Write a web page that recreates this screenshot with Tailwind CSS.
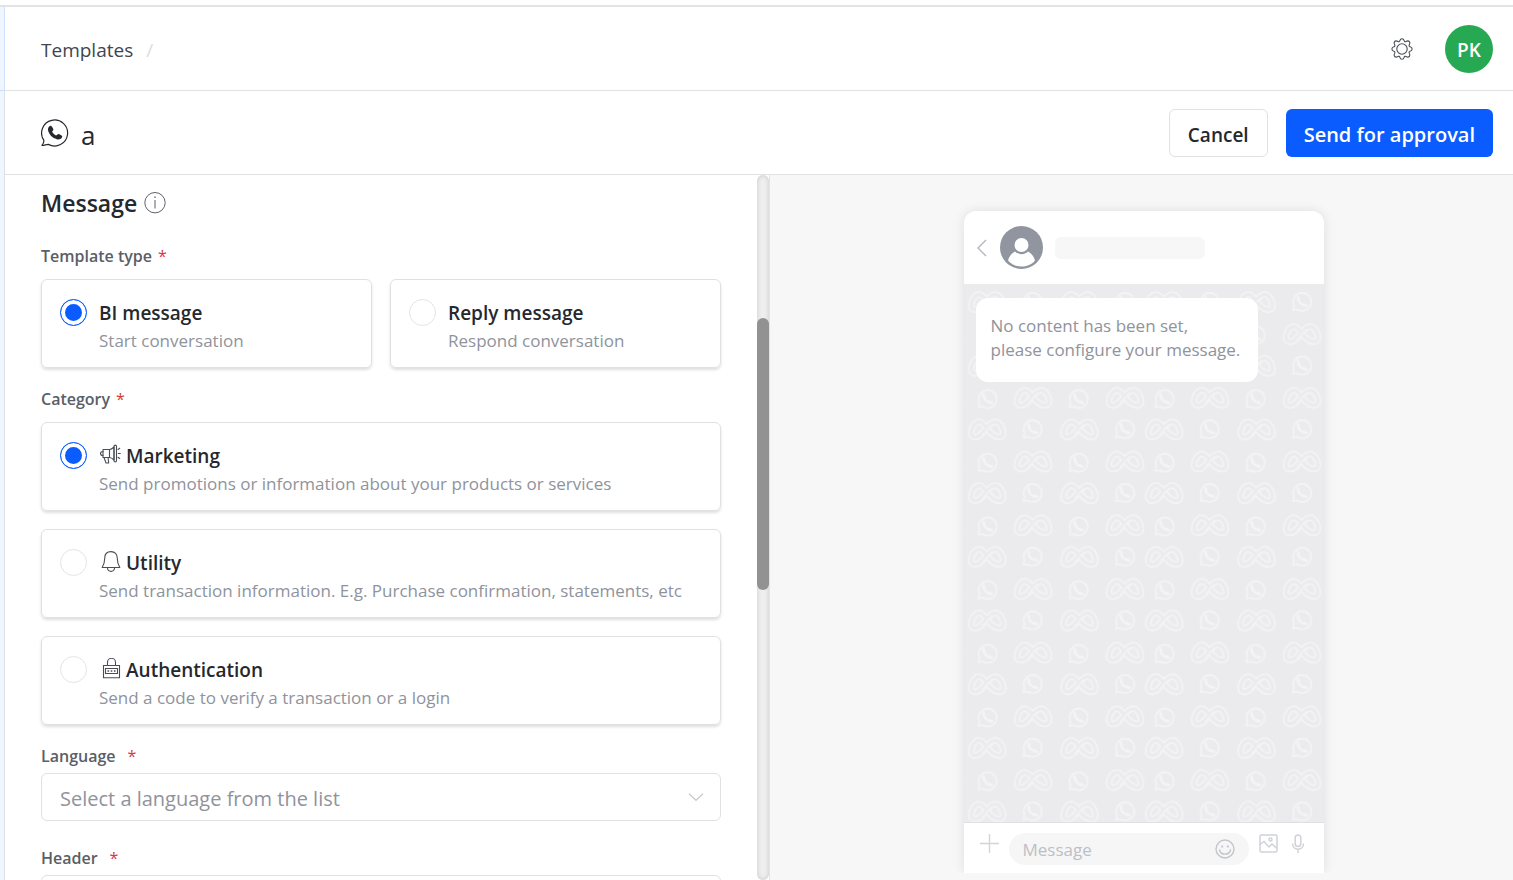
<!DOCTYPE html>
<html lang="en">
  <head>
    <meta charset="UTF-8" />
    <meta name="viewport" content="width=device-width, initial-scale=1.0" />
    <title>Templates</title>
    <!-- Tailwind CSS CDN -->
    <script src="https://cdn.jsdelivr.net/npm/@tailwindcss/browser@4"></script>
  </head>
  <body class="h-screen overflow-hidden flex flex-col bg-white font-['Open_Sans','Noto_Sans',sans-serif] text-[#25282d]">
    <div class="h-[7px] shrink-0 border-b-2 border-[#e3e3e3]"></div>
    <div class="flex flex-1 min-h-0">
      <!-- Collapsed side rail -->
      <aside class="w-[5px] shrink-0 flex flex-col bg-[#f0f6ff]">
        <div class="h-[84px] border-r border-b border-[#cfe0fb]"></div>
        <div class="flex-1 border-r border-[#e0e1e4]"></div>
      </aside>

      <div class="flex-1 min-w-0 flex flex-col">
        <!-- Top bar -->
        <header class="h-[84px] shrink-0 flex items-center justify-between pl-9 pr-5 border-b border-[#e2e2e2]">
          <nav class="flex items-center gap-[13px] text-[19px] leading-7 pt-0.5">
            <a href="#" class="text-[#41454c]">Templates</a>
            <span class="text-[#dcdde1]">/</span>
          </nav>
          <div class="flex items-center gap-8">
            <button type="button" aria-label="Settings">
              <svg class="size-[22px]" viewBox="0 0 22 22" fill="none" stroke="#4a4e55" stroke-width="1.1" stroke-linejoin="round">
                <path d="M8.900 2.700C9.200 1.300 9.800.7 11 .7s1.800.6 2.100 2c.2.900 1.200 1.300 2 .8 1.200-.8 2.400-.8 3.200 0s.8 2 0 3.200c-.5.8-.1 1.800.8 2 1.400.3 2 1.100 2 2.300s-.6 2-2 2.300c-.9.200-1.300 1.200-.8 2 .8 1.200.8 2.400 0 3.200s-2 .8-3.200 0c-.8-.5-1.800-.1-2 .8-.3 1.400-.9 2-2.100 2s-1.800-.6-2.100-2c-.2-.9-1.200-1.300-2-.8-1.200.8-2.400.8-3.200 0s-.8-2 0-3.200c.5-.8.1-1.800-.8-2-1.400-.3-2-1.100-2-2.300s.6-2 2-2.300c.9-.2 1.300-1.200.8-2-.8-1.200-.8-2.400 0-3.200s2-.8 3.200 0c.8.500 1.800.1 2-.8z" />
                <circle cx="11" cy="11" r="5.200" />
              </svg>
            </button>
            <button type="button" class="size-12 pt-1 rounded-full bg-[#27a953] text-white text-[19px] font-semibold leading-none">PK</button>
          </div>
        </header>

        <!-- Template name and actions -->
        <div class="h-[84px] shrink-0 flex items-center justify-between pl-9 pr-5 border-b border-[#e2e2e2]">
          <div class="flex items-center gap-3">
            <svg class="size-7" viewBox="0 0 28 28" fill="none" stroke="#25282d" stroke-width="1.200">
              <path d="M2.800 21.200A13 13 0 1 1 7.400 25.400C5.500 25.300 3 26.600 1 26.400c1.500-1.800 2.100-3.300 1.800-5.200z" stroke-linejoin="round" />
              <path d="M8.200 7.400c.9-.8 2.200-.7 2.800.3l1.200 2c.4.8 0 1.600-.6 2.200-.5.6-.4 1 0 1.600a8 8 0 0 0 2.900 2.700c.6.3 1 .2 1.500-.3.7-.7 1.500-1 2.300-.6l2.200 1.100c.9.500.9 1.500.3 2.300-1 1.500-3 2-5 1.500-4.300-1-7.800-4.700-8.700-8.600-.4-1.700.1-3.400 1.100-4.200z" fill="#25282d" stroke="none" />
            </svg>
            <h1 class="pt-1 text-[26px] leading-9">a</h1>
          </div>
          <div class="flex items-center gap-[18px]">
            <button type="button" class="h-12 px-[18px] pt-1 rounded-md border border-[#e0e1e3] bg-white text-[19px] leading-7 font-semibold">Cancel</button>
            <button type="button" class="h-12 px-[18px] pt-1 rounded-md bg-[#0a5cff] text-white text-[20px] leading-7 font-semibold">Send for approval</button>
          </div>
        </div>

        <main class="flex flex-1 min-h-0">
          <!-- Form -->
          <form class="w-[752px] shrink-0 overflow-hidden px-9 pt-[10px]">
            <div class="flex items-center gap-[7px] mb-[23px]">
              <h2 class="text-[23px] leading-9 font-semibold">Message</h2>
              <svg class="size-[22px]" viewBox="0 0 22 22" fill="none" stroke="#5d6169" stroke-width="1">
                <circle cx="11" cy="10.700" r="10.200" />
                <path d="M11 8v8.500" />
                <path d="M11 4.500v1.500" stroke-width="1.300" />
              </svg>
            </div>

            <fieldset class="mb-[19px]">
              <legend class="mb-[11px] text-[16px] leading-6 font-semibold text-[#5a5e66]">Template type<span class="pl-1.5 font-normal text-[#d9363e]">*</span></legend>
              <div class="grid grid-cols-2 gap-[18px]">
                <label class="flex gap-3 px-[18px] pt-[19px] pb-[14px] rounded-md border border-[#e0e1e3] shadow-[0_2px_3px_rgba(0,0,0,0.13)]">
                  <input type="radio" name="type" checked class="appearance-none size-[27px] shrink-0 rounded-full border border-[#e3e4e6] checked:border-[#0a5cff] checked:bg-[#0a5cff] checked:shadow-[inset_0_0_0_4px_white]" />
                  <span>
                    <span class="block text-[19px] leading-7 font-semibold">BI message</span>
                    <span class="block mt-0.5 text-[17px] leading-6 text-[#8f939c]">Start conversation</span>
                  </span>
                </label>
                <label class="flex gap-3 px-[18px] pt-[19px] pb-[14px] rounded-md border border-[#e0e1e3] shadow-[0_2px_3px_rgba(0,0,0,0.13)]">
                  <input type="radio" name="type" class="appearance-none size-[27px] shrink-0 rounded-full border border-[#e3e4e6] checked:border-[#0a5cff] checked:bg-[#0a5cff] checked:shadow-[inset_0_0_0_4px_white]" />
                  <span>
                    <span class="block text-[19px] leading-7 font-semibold">Reply message</span>
                    <span class="block mt-0.5 text-[17px] leading-6 text-[#8f939c]">Respond conversation</span>
                  </span>
                </label>
              </div>
            </fieldset>

            <fieldset class="mb-[19px]">
              <legend class="mb-[11px] text-[16px] leading-6 font-semibold text-[#5a5e66]">Category<span class="pl-1.5 font-normal text-[#d9363e]">*</span></legend>
              <div class="flex flex-col gap-[18px]">
                <label class="flex gap-3 px-[18px] pt-[19px] pb-[14px] rounded-md border border-[#e0e1e3] shadow-[0_2px_3px_rgba(0,0,0,0.13)]">
                  <input type="radio" name="category" checked class="appearance-none size-[27px] shrink-0 rounded-full border border-[#e3e4e6] checked:border-[#0a5cff] checked:bg-[#0a5cff] checked:shadow-[inset_0_0_0_4px_white]" />
                  <span>
                    <span class="flex items-center gap-[3px] text-[19px] leading-7 font-semibold">
                      <svg class="size-6" viewBox="0 1 24 24" fill="none" stroke="#4a4e55" stroke-width="1.100" stroke-linejoin="round" stroke-linecap="round">
                        <path d="M4 6.500h6.500c2 0 3.200-1.200 4.500-2.500v13c-1.300-1.300-2.500-2.500-4.500-2.500H4z" />
                        <path d="M4 8.500c-1.300 0-2.500.7-2.500 2s1.200 2 2.500 2M10.500 6.500v8M15 3.300c0-.8.600-1.200 1.300-1.200s1.200.4 1.200 1.200v14.400c0 .8-.5 1.200-1.200 1.200s-1.300-.4-1.300-1.200zM5 14.500l2 5.500h2.700L9 14.500M19 6.500l1.700-1.200M19.300 10.500h2M19 14.300l1.700 1.200" />
                      </svg>
                      Marketing
                    </span>
                    <span class="block mt-0.5 text-[17px] leading-6 text-[#8f939c]">Send promotions or information about your products or services</span>
                  </span>
                </label>
                <label class="flex gap-3 px-[18px] pt-[19px] pb-[14px] rounded-md border border-[#e0e1e3] shadow-[0_2px_3px_rgba(0,0,0,0.13)]">
                  <input type="radio" name="category" class="appearance-none size-[27px] shrink-0 rounded-full border border-[#e3e4e6] checked:border-[#0a5cff] checked:bg-[#0a5cff] checked:shadow-[inset_0_0_0_4px_white]" />
                  <span>
                    <span class="flex items-center gap-[3px] text-[19px] leading-7 font-semibold">
                      <svg class="size-6" viewBox="0 1 24 24" fill="none" stroke="#4a4e55" stroke-width="1.100" stroke-linejoin="round" stroke-linecap="round">
                        <path d="M12 1.600c-4 0-6.200 2.500-6.200 6.200 0 4.500-1 6.800-2.600 9.700h17.600c-1.600-2.900-2.600-5.200-2.600-9.700C18.200 4.100 16 1.600 12 1.600z" />
                        <path d="M8.300 17.500c.3 2.500 1.600 3.900 3.700 3.900s3.400-1.400 3.700-3.900" />
                      </svg>
                      Utility
                    </span>
                    <span class="block mt-0.5 text-[17px] leading-6 text-[#8f939c]">Send transaction information. E.g. Purchase confirmation, statements, etc</span>
                  </span>
                </label>
                <label class="flex gap-3 px-[18px] pt-[19px] pb-[14px] rounded-md border border-[#e0e1e3] shadow-[0_2px_3px_rgba(0,0,0,0.13)]">
                  <input type="radio" name="category" class="appearance-none size-[27px] shrink-0 rounded-full border border-[#e3e4e6] checked:border-[#0a5cff] checked:bg-[#0a5cff] checked:shadow-[inset_0_0_0_4px_white]" />
                  <span>
                    <span class="flex items-center gap-[3px] text-[19px] leading-7 font-semibold">
                      <svg class="size-6" viewBox="0 1 24 24" fill="none" stroke="#4a4e55" stroke-width="1.100">
                        <path d="M4.500 8.500h16v12.200h-16zM8.500 8.500V5.300a4 4 0 0 1 8 0v3.200M6.500 11.500h12v5h-12z" />
                        <path d="M8.500 14h1.600M11.700 14h1.600M14.900 14h1.600" stroke-width="1.600" />
                      </svg>
                      Authentication
                    </span>
                    <span class="block mt-0.5 text-[17px] leading-6 text-[#8f939c]">Send a code to verify a transaction or a login</span>
                  </span>
                </label>
              </div>
            </fieldset>

            <div class="mb-[25px]">
              <label for="language" class="block mb-[5px] text-[16px] leading-6 font-semibold text-[#5a5e66]">Language<span class="pl-3 font-normal text-[#d9363e]">*</span></label>
              <div class="grid items-center">
                <select id="language" class="col-start-1 row-start-1 appearance-none w-full h-12 px-[18px] pt-[3px] rounded-md border border-[#e0e1e3] bg-white text-[20px] text-[#8f939c]">
                  <option>Select a language from the list</option>
                </select>
                <svg class="col-start-1 row-start-1 justify-self-end mr-[17px] w-4 h-2 pointer-events-none" viewBox="0 0 16 8" fill="none" stroke="#c9cbd0" stroke-width="1.300">
                  <path d="M1 .7l7 6.600 7-6.600" />
                </svg>
              </div>
            </div>

            <div>
              <label for="header" class="block mb-[5px] text-[16px] leading-6 font-semibold text-[#5a5e66]">Header<span class="pl-3 font-normal text-[#d9363e]">*</span></label>
              <select id="header" class="appearance-none w-full h-12 px-[18px] rounded-md border border-[#e0e1e3] bg-white text-[20px] text-[#8f939c]">
                <option>Select</option>
              </select>
            </div>
          </form>

          <!-- Scrollbar -->
          <div class="w-3 shrink-0 flex flex-col rounded-md bg-[#efefef] shadow-[inset_0_0_5px_#c8c8c8]">
            <div class="grow-[143]"></div>
            <div class="grow-[272] rounded-md bg-[#929292]"></div>
            <div class="grow-[290]"></div>
          </div>

          <!-- Preview -->
          <section class="flex-1 min-w-0 flex flex-col items-center pt-9 pb-[7px] pl-1 border-l border-[#e4e4e4] bg-[#f7f7f7] overflow-hidden">
            <div class="w-[360px] flex-1 min-h-0 flex flex-col rounded-t-xl bg-white shadow-[0_0_12px_rgba(0,0,0,0.1)] [clip-path:inset(-20px_-20px_0_-20px)]">
              <div class="h-[73px] shrink-0 flex items-center pl-3">
                <svg class="w-3 h-[18px] mr-3" viewBox="0 0 12 18" fill="none" stroke="#b4b6bc" stroke-width="1.400">
                  <path d="M10 1L2 9l8 8" />
                </svg>
                <svg class="size-11 mr-[11px]" viewBox="0 0 44 44">
                  <circle cx="21.500" cy="21.500" r="21.500" fill="#9195a0" />
                  <circle cx="21.500" cy="19" r="7" fill="#fff" />
                  <path d="M8 34.500c1-4 3.500-7.200 7-9 3.600 3.600 9.400 3.600 13 0 3.500 1.800 6 5 7 9-6.500 8-20.500 8-27 0z" fill="#fff" />
                </svg>
                <div class="w-[150px] h-[22px] rounded-md bg-[#f7f7f7]"></div>
              </div>

              <!-- Chat area: wallpaper and message share one grid cell -->
              <div class="flex-1 min-h-0 grid border-b border-[#e0e0e2] bg-[#ebebed]">
                <svg class="col-start-1 row-start-1 size-full" aria-hidden="true">
                  <defs>
                    <path id="loop" d="M0-.5C-3-5-5.500-7.500-8-7.500c-4.500 0-8 6.500-8 11 0 2.700 1.600 4.200 4 4.200C-7.500 7.700-5 4 0-2 3-5.500 5-7.500 8-7.500c4.500 0 8 6.500 8 11 0 2.700-1.600 4.200-4 4.200C7.500 7.700 4.500 5.500 0-.5z" />
                    <g id="infinity" fill="none" stroke-linejoin="round">
                      <use href="#loop" stroke="#f4f4f5" stroke-width="6.600" />
                      <use href="#loop" stroke="#ebebed" stroke-width="3.400" />
                      <path d="M-5 5.500C-2 3.500 1-2 5-5" stroke="#f3f3f4" stroke-width="1.500" />
                    </g>
                    <g id="phone" fill="none" stroke="#f4f4f5" stroke-width="1.600" stroke-linejoin="round">
                      <path d="M-8 4A9 9 0 1 1-4.500 8L-9 8.700z" />
                      <path d="M-4-4.500C-4.500 0 0 4.500 4.500 4.200M-4-4.500l.8 2.300M4.500 4.200L2.200 3" stroke-width="2.400" stroke-linecap="round" />
                    </g>
                    <pattern id="wallpaper" x="3.500" y="0" width="177" height="63.700" patternUnits="userSpaceOnUse">
                      <use href="#infinity" x="19.700" y="18" />
                      <use href="#phone" x="65" y="17.500" />
                      <use href="#infinity" x="112" y="18" />
                      <use href="#phone" x="157.500" y="17.500" />
                      <use href="#phone" x="20" y="51" />
                      <use href="#infinity" x="65.500" y="50" />
                      <use href="#phone" x="111" y="51" />
                      <use href="#infinity" x="157.500" y="50" />
                    </pattern>
                  </defs>
                  <rect x="3.500" width="354" height="100%" fill="url(#wallpaper)" />
                </svg>
                <p class="col-start-1 row-start-1 self-start justify-self-start z-10 w-[282px] mt-[14px] ml-3 pl-[15px] pt-4 pb-5 rounded-xl bg-white text-[17px] leading-6 text-[#8f939c]">No content has been set,<br />please configure your message.</p>
              </div>

              <div class="h-[50px] shrink-0 flex pt-[10px] pl-4">
                <svg class="size-[19px] mt-px mr-[10px]" viewBox="0 0 19 19" stroke="#d3d4da" stroke-width="1.400">
                  <path d="M9.500 0v19M0 9.500h19" />
                </svg>
                <div class="w-60 h-8 flex items-center pl-[14px] pr-[14px] rounded-full bg-[#f6f6f6] mr-[10px]">
                  <input type="text" aria-label="Message" placeholder="Message" class="flex-1 min-w-0 pt-0.5 bg-transparent text-[17px] text-[#8f939c] placeholder:text-[#bdbfc6] outline-none" />
                  <svg class="size-5" viewBox="0 0 20 20" fill="none" stroke="#c3c5cc" stroke-width="1.400">
                    <circle cx="10" cy="10" r="9" />
                    <path d="M4.500 11c1.200 5.500 9.800 5.500 11 0" stroke-linecap="round" />
                    <path d="M7.200 6.500v2M12.800 6.500v2" stroke-width="1.800" />
                  </svg>
                </div>
                <svg class="size-[19px] mt-px mr-[13px]" viewBox="0 0 19 19" fill="none" stroke="#d0d2d8" stroke-width="1.500">
                  <rect x="1" y="1" width="17" height="17" rx="1.500" />
                  <path d="M1 10.500l4-3 5 5.500 3-3 5 4.500" />
                  <circle cx="11.500" cy="5.500" r="1.500" />
                </svg>
                <svg class="w-[14px] h-5 mt-px" viewBox="0 0 14 20" fill="none" stroke="#d0d2d8" stroke-width="1.500">
                  <rect x="4.200" y="1" width="5.600" height="11.500" rx="2.800" />
                  <path d="M1.500 9.500c0 7.500 11 7.500 11 0M7 15.200V19" />
                </svg>
              </div>
            </div>
          </section>
        </main>
      </div>
    </div>
  </body>
</html>
